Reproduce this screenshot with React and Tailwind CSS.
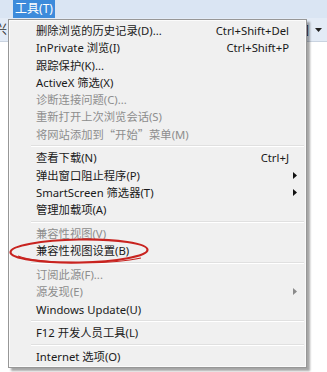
import React from "react";

const FONT = { fontFamily: "'Noto Sans', 'Noto Sans CJK SC', sans-serif" };
const CJK = { fontFamily: "'Noto Sans CJK SC', sans-serif" };

const items = [
  { t: "删除浏览的历史记录(D)...", k: "Ctrl+Shift+Del" },
  { t: "InPrivate 浏览(I)", k: "Ctrl+Shift+P" },
  { t: "跟踪保护(K)..." },
  { t: "ActiveX 筛选(X)" },
  { t: "诊断连接问题(C)...", d: true },
  { t: "重新打开上次浏览会话(S)", d: true },
  { t: "将网站添加到“开始”菜单(M)", d: true },
  { sep: true },
  { t: "查看下载(N)", k: "Ctrl+J" },
  { t: "弹出窗口阻止程序(P)", sub: true },
  { t: "SmartScreen 筛选器(T)", sub: true },
  { t: "管理加载项(A)" },
  { sep: true },
  { t: "兼容性视图(V)", d: true },
  { t: "兼容性视图设置(B)" },
  { sep: true },
  { t: "订阅此源(F)...", d: true },
  { t: "源发现(E)", d: true, sub: true },
  { t: "Windows Update(U)" },
  { sep: true },
  { t: "F12 开发人员工具(L)" },
  { sep: true },
  { t: "Internet 选项(O)" },
];

function Label({ text }) {
  const parts = text.split(/([“”])/);
  return (
    <span className="whitespace-nowrap">
      {parts.map((p, i) =>
        p === "“" || p === "”" ? (
          <span key={i} style={CJK}>
            {p}
          </span>
        ) : (
          <React.Fragment key={i}>{p}</React.Fragment>
        )
      )}
    </span>
  );
}

function Arrow({ d }) {
  return (
    <svg width="4" height="7" viewBox="0 0 4 7" className="shrink-0">
      <path d="M0 0 L4 3.5 L0 7 Z" fill={d ? "#8a8a8a" : "#111"} />
    </svg>
  );
}

export default function App() {
  return (
    <div
      className="relative w-[327px] h-[372px] overflow-hidden bg-white text-[11.3px]"
      style={FONT}
    >
      {/* menu bar */}
      <div className="flex h-[18px] bg-[#dae5f3]">
        <div className="ml-[13px] flex h-[18px] w-[42px] items-center justify-center bg-[#3d8bdb] text-[12px] text-white leading-none">
          工具(T)
        </div>
      </div>
      {/* command bar */}
      <div className="flex h-[24px] items-center justify-between border-b border-[#c9d3e0] bg-[#e3ebf6] text-[12px] text-[#333]">
        <span className="-ml-[5px] leading-none">兴</span>
        <span className="flex items-center gap-[6px] pr-[5px] leading-none">
          <span>]</span>
          <svg width="7" height="4" viewBox="0 0 7 4">
            <path d="M0 0 L7 0 L3.5 4 Z" fill="#222" />
          </svg>
        </span>
      </div>

      {/* dropdown menu */}
      <div className="absolute left-[8px] top-[19px] w-[299px] border border-[#979797] bg-[#f0f0f0] py-[2px] shadow-[inset_0_0_0_1px_#fbfbfb,3px_3px_2px_rgba(0,0,0,0.35)]">
        {items.map((it, i) =>
          it.sep ? (
            <div key={i} className="flex h-[6.4px] flex-col justify-center pl-[22px] pr-[2px]">
              <div className="h-px bg-[#e0e0e0]" />
              <div className="h-px bg-white" />
            </div>
          ) : (
            <div
              key={i}
              className={`flex h-[17.3px] items-center pl-[27px] pr-[9px] leading-none ${
                it.d ? "text-[#8d8d8d]" : "text-[#1a1a1a]"
              }`}
            >
              <Label text={it.t} />
              <span className="flex-1" />
              {it.k && <span className="mr-[8px] whitespace-nowrap">{it.k}</span>}
              {it.sub && <Arrow d={it.d} />}
            </div>
          )
        )}
      </div>

      {/* red annotation ellipse */}
      <svg
        className="pointer-events-none absolute left-0 top-0"
        width="327"
        height="372"
        viewBox="0 0 327 372"
      >
        <ellipse cx="79" cy="251" rx="68.5" ry="11.5" fill="none" stroke="#c8231f" strokeWidth="2.2" transform="rotate(-1 79 251)" />
        <path d="M18 256 C 40 264, 110 265, 141 258" fill="none" stroke="#c8231f" strokeWidth="1.2" />
      </svg>
    </div>
  );
}
